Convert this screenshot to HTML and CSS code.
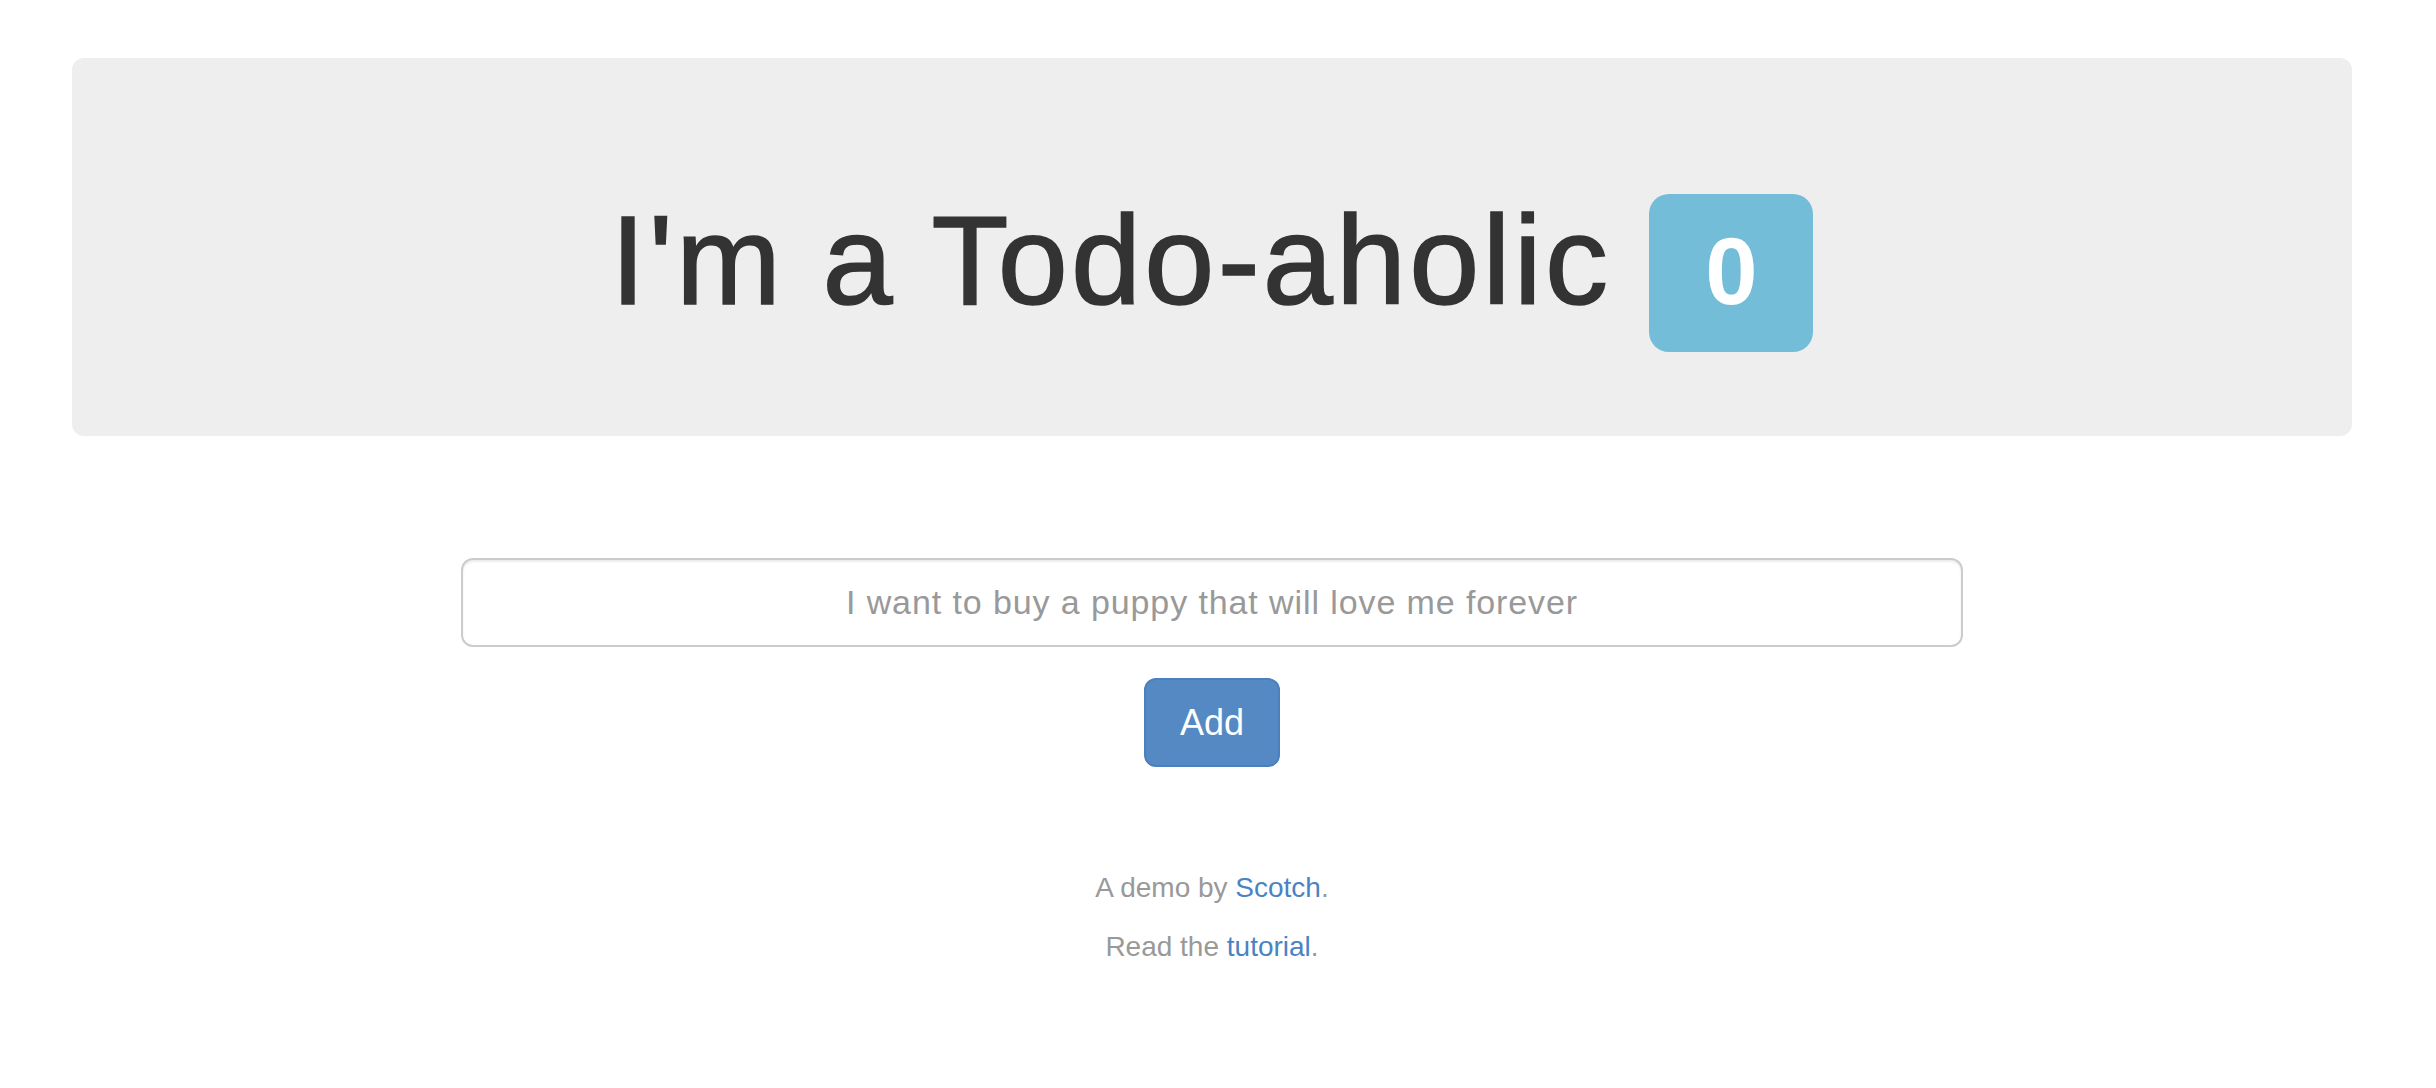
FILE: index.html
```html
<!DOCTYPE html>
<html lang="en">
<head>
<meta charset="utf-8">
<title>I'm a Todo-aholic</title>
<link rel="stylesheet" href="styles.css">
</head>
<body>
<div class="page">
  <div class="jumbotron">
    <h1 class="title">I'm a Todo-aholic <span class="badge">0</span></h1>
  </div>
  <form class="todo-form">
    <input class="todo-input" type="text" placeholder="I want to buy a puppy that will love me forever">
    <button class="btn-add" type="button">Add</button>
  </form>
  <div class="footer">
    <p class="footer-line">A demo by <a href="#">Scotch</a>.</p>
    <p class="footer-line">Read the <a href="#">tutorial</a>.</p>
  </div>
</div>
</body>
</html>
```

FILE: styles.css
```css
html, body {
  margin: 0;
  padding: 0;
  background: #fff;
}
body {
  font-family: "Liberation Sans", Arial, Helvetica, sans-serif;
  color: #333;
}
.page {
  padding: 58px 84px 0 72px;
}
.jumbotron {
  background: #eeeeee;
  border-radius: 12px;
  padding: 133px 0 84px;
  text-align: center;
}
.title {
  margin: 0;
  font-size: 126px;
  line-height: 139px;
  font-weight: normal;
  letter-spacing: 3.2px;
  color: #333;
  -webkit-text-stroke: 1.6px #333;
}
.badge {
  display: inline-block;
  box-sizing: border-box;
  width: 164px;
  height: 158px;
  padding-top: 31px;
  font-size: 94px;
  line-height: 94px;
  font-weight: bold;
  letter-spacing: 0;
  text-align: center;
  color: #fff;
  background: #74bdd9;
  border-radius: 20px;
  vertical-align: baseline;
  -webkit-text-stroke: 0;
}
.todo-form {
  margin: 122px 0 0;
  display: flex;
  flex-direction: column;
  align-items: center;
}
.todo-input {
  box-sizing: border-box;
  width: 1502px;
  height: 89px;
  margin: 0;
  padding: 0 32px;
  border: 2px solid #cccccc;
  border-radius: 12px;
  box-shadow: inset 0 2px 2px rgba(0,0,0,0.075);
  font-family: "Liberation Sans", Arial, sans-serif;
  font-size: 34px;
  letter-spacing: 0.9px;
  text-align: center;
  color: #555;
  outline: none;
}
.todo-input::placeholder {
  color: #999;
}
.btn-add {
  box-sizing: border-box;
  margin-top: 31px;
  width: 136px;
  height: 89px;
  padding: 0;
  border: 2px solid #4a80bd;
  border-radius: 12px;
  background: #5489c4;
  color: #fff;
  font-family: "Liberation Sans", Arial, sans-serif;
  font-size: 36px;
  line-height: 85px;
}
.footer {
  margin-top: 101px;
  text-align: center;
}
.footer-line {
  margin: 0 0 19px;
  font-size: 28px;
  line-height: 40px;
  color: #999;
}
.footer-line a {
  color: #4a83c4;
  text-decoration: none;
}
```
